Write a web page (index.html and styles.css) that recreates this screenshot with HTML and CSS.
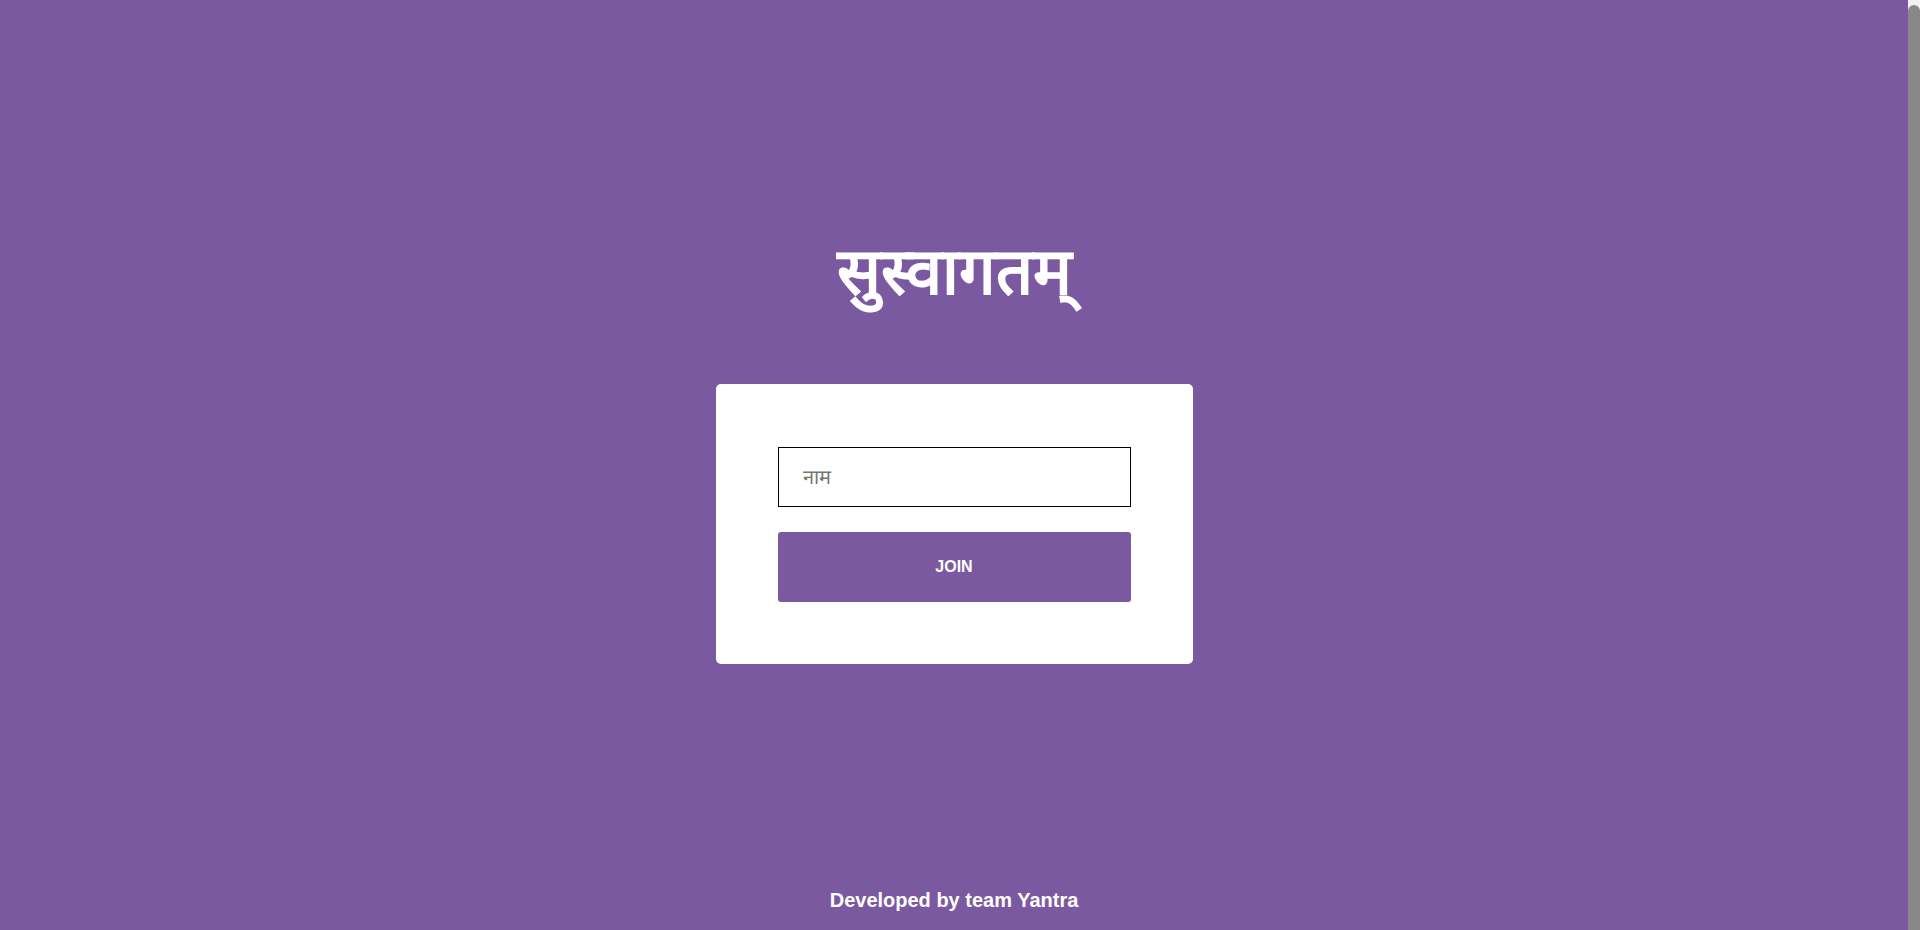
FILE: index.html
```html
<!DOCTYPE html>
<html lang="hi">
<head>
<meta charset="utf-8">
<title>सुस्वागतम्</title>
<link rel="stylesheet" href="styles.css">
</head>
<body>
<div class="page">
  <main class="main">
    <h1 class="title">सुस्वागतम्</h1>
    <form class="card" onsubmit="return false">
      <input class="name-input" type="text" placeholder="नाम">
      <button class="join-btn" type="submit">JOIN</button>
    </form>
  </main>
  <footer class="footer">Developed by team Yantra</footer>
</div>
<div class="fake-scrollbar" aria-hidden="true"><div class="fake-thumb"></div></div>
</body>
</html>
```
FILE: styles.css
```css
html, body {
  margin: 0;
  padding: 0;
}
html {
  background: #7b59a0;
  overflow: hidden;
}
body {
  background: #7b59a0;
  font-family: "Liberation Sans", Arial, sans-serif;
  color: #ffffff;
}
.page {
  height: 930px;
  box-sizing: border-box;
  padding-right: 12px;
  display: flex;
  flex-direction: column;
}
.main {
  flex: 1;
  display: flex;
  flex-direction: column;
  align-items: center;
  padding-top: 232px;
}
.title {
  margin: 0;
  font-size: 65px;
  line-height: 80px;
  font-weight: 700;
}
.card {
  margin-top: 72px;
  width: 353px;
  padding: 63px 62px 62px;
  background: #ffffff;
  border-radius: 5px;
  display: flex;
  flex-direction: column;
  gap: 25px;
}
.name-input {
  box-sizing: border-box;
  width: 100%;
  height: 60px;
  margin: 0;
  padding: 0 24px;
  border: 1px solid #000000;
  border-radius: 0;
  font-family: "Liberation Sans", Arial, sans-serif;
  font-size: 20px;
  color: #333333;
  outline: none;
}
.name-input::placeholder {
  color: #757575;
}
.join-btn {
  height: 70px;
  margin: 0;
  border: none;
  border-radius: 3px;
  background: #7b59a0;
  color: #ffffff;
  font-family: "Liberation Sans", Arial, sans-serif;
  font-size: 16px;
  font-weight: 700;
  cursor: pointer;
}
.footer {
  text-align: center;
  font-size: 20px;
  font-weight: 700;
  padding-bottom: 18px;
}
.fake-scrollbar {
  position: fixed;
  top: 0;
  right: 0;
  width: 12px;
  height: 930px;
  background: #f1f1f1;
}
.fake-thumb {
  position: absolute;
  top: 5px;
  left: 0;
  right: 0;
  bottom: 0;
  background: #888888;
  border-radius: 6px 6px 0 0;
}
```
